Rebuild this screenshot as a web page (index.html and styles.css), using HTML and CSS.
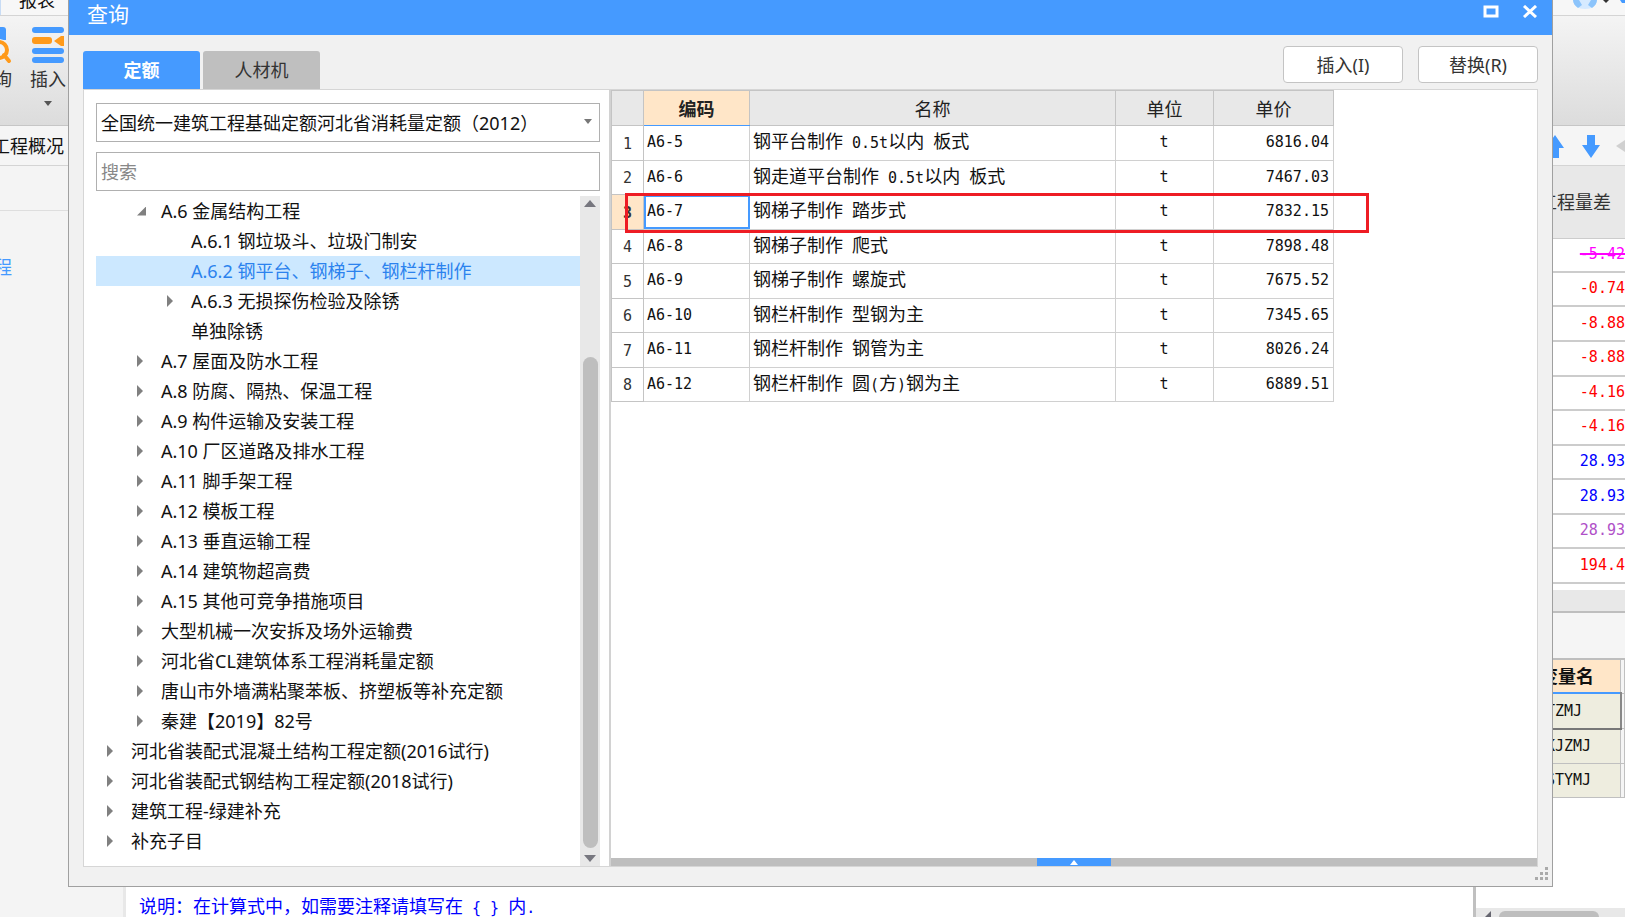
FILE: index.html
```html
<!DOCTYPE html>
<html lang="zh-CN">
<head>
<meta charset="utf-8">
<title>查询</title>
<link rel="stylesheet" href="styles.css">
</head>
<body>
<div class="app">
  <header class="tabstrip">
    <button class="strip-tab" type="button">报表</button>
    <svg class="account" width="56" height="10" viewBox="0 0 56 10" aria-hidden="true">
      <path d="M4 0h24c-1 6-5 9-12 9S5 6 4 0z" fill="#d6eaff"/>
      <path d="M4 0h6l3 5-4 3C6 6 4 3 4 0zM28 0h-6l-3 5 4 3c3-2 5-5 5-8z" fill="#8cc4fb"/>
      <path d="M34 0h6l-3 3z" fill="#333"/>
      <path d="M51 0h5v3h-3z" fill="#459aff"/>
    </svg>
  </header>
  <div class="ribbon">
    <button class="ribbon-btn" type="button">
      <svg width="36" height="40" viewBox="0 0 36 40" aria-hidden="true">
        <path d="M2 5q0-3 3-3h22q3 0 3 3v10H2z" fill="#459aff"/>
        <circle cx="23" cy="25" r="11" fill="#f2f2f2"/>
        <circle cx="23" cy="25" r="8" fill="none" stroke="#ff9a1a" stroke-width="4"/>
        <path d="M28 30l5 6" stroke="#ff9a1a" stroke-width="4" stroke-linecap="round"/>
      </svg>
      <span>查询</span>
    </button>
    <button class="ribbon-btn" type="button">
      <svg width="36" height="40" viewBox="0 0 36 40" aria-hidden="true">
        <g fill="#459aff"><rect x="2" y="2" width="32" height="6" rx="3"/><rect x="2" y="23" width="32" height="6" rx="3"/><rect x="2" y="32" width="32" height="6" rx="3"/></g>
        <rect x="2" y="12" width="20" height="7" rx="3" fill="#ff9a1a"/><path d="M24 16l7-5h3v10h-3z" fill="#ff9a1a"/>
      </svg>
      <span>插入</span>
      <svg class="btn-caret" width="8" height="5" viewBox="0 0 8 5" aria-hidden="true"><path d="M0 0h8L4 5z" fill="#555"/></svg>
    </button>
  </div>
  <div class="toolbar">
    <button class="overview" type="button">工程概况</button>
    <div class="movers">
      <button type="button" aria-label="上移"><svg width="18" height="24" viewBox="0 0 18 24"><path d="M9 1l9 13h-5v10H5V14H0z" fill="#459aff"/></svg></button>
      <button type="button" aria-label="下移"><svg width="18" height="24" viewBox="0 0 18 24"><path d="M5 1h8v10h5L9 24 0 11h5z" fill="#459aff"/></svg></button>
      <button type="button" aria-label="左移"><svg width="9" height="24" viewBox="0 0 9 24"><path d="M0 12L9 6v12z" fill="#d0d0d0"/></svg></button>
    </div>
  </div>
  <div class="workspace">
    <nav class="side"><div class="side-head"></div><a href="#">程</a></nav>
    <main class="sheet"><p class="hint">说明：在计算式中，如需要注释请填写在<span class="mono"> { } </span>内<span class="mono">.</span></p></main>
    <aside class="extra">
      <table class="diffs">
        <thead><tr><th>工程量差</th></tr></thead>
        <tbody>
          <tr><td class="gone">-5.42</td></tr>
          <tr><td class="neg">-0.74</td></tr>
          <tr><td class="neg">-8.88</td></tr>
          <tr><td class="neg">-8.88</td></tr>
          <tr><td class="neg">-4.16</td></tr>
          <tr><td class="neg">-4.16</td></tr>
          <tr><td class="pos">28.93</td></tr>
          <tr><td class="pos">28.93</td></tr>
          <tr><td class="alt">28.93</td></tr>
          <tr><td class="neg">194.4</td></tr>
        </tbody>
      </table>
      <div class="splitter"></div>
      <div class="subbar"></div>
      <table class="vars">
        <thead><tr><th>变量名</th><th class="rest"></th></tr></thead>
        <tbody>
          <tr><td class="picked">TZMJ</td><td class="rest"></td></tr>
          <tr><td>KJZMJ</td><td class="rest"></td></tr>
          <tr><td>STYMJ</td><td class="rest"></td></tr>
        </tbody>
      </table>
      <div class="hscroll"><svg width="6" height="9" viewBox="0 0 6 9" aria-hidden="true"><path d="M6 3v6H0z" fill="#666670"/></svg><div class="hthumb"></div></div>
    </aside>
  </div>

  <section class="dialog" role="dialog" aria-labelledby="dlg-title">
    <div class="titlebar">
      <h1 id="dlg-title">查询</h1>
      <div class="winctl">
        <button type="button" aria-label="最大化"><svg width="16" height="13" viewBox="0 0 16 13"><rect x="2" y="2" width="12" height="9" fill="none" stroke="#fff" stroke-width="3"/></svg></button>
        <button type="button" aria-label="关闭"><svg width="16" height="13" viewBox="0 0 16 13"><path d="M2 1l12 11M14 1L2 12" stroke="#fff" stroke-width="3"/></svg></button>
      </div>
    </div>
    <div class="dialog-body">
      <div class="head">
        <div class="tabs" role="tablist">
          <button class="tab active" type="button" role="tab" aria-selected="true">定额</button>
          <button class="tab" type="button" role="tab" aria-selected="false">人材机</button>
        </div>
        <div class="actions">
          <button class="action" type="button">插入(I)</button>
          <button class="action" type="button">替换(R)</button>
        </div>
      </div>
      <div class="panel">
        <div class="left">
          <div class="combo">
            <select aria-label="定额库"><option>全国统一建筑工程基础定额河北省消耗量定额（2012）</option></select>
            <svg width="8" height="5" viewBox="0 0 8 5" aria-hidden="true"><path d="M0 0h8L4 5z" fill="#777"/></svg>
          </div>
          <input class="search" type="text" placeholder="搜索" aria-label="搜索">
          <div class="tree-wrap">
            <ul class="tree">
              <li><button type="button" class="node l1 open">A.6 金属结构工程</button></li>
              <li><button type="button" class="node l2 leaf">A.6.1 钢垃圾斗、垃圾门制安</button></li>
              <li><button type="button" class="node l2 leaf selected">A.6.2 钢平台、钢梯子、钢栏杆制作</button></li>
              <li><button type="button" class="node l2">A.6.3 无损探伤检验及除锈</button></li>
              <li><button type="button" class="node l2 leaf">单独除锈</button></li>
              <li><button type="button" class="node l1">A.7 屋面及防水工程</button></li>
              <li><button type="button" class="node l1">A.8 防腐、隔热、保温工程</button></li>
              <li><button type="button" class="node l1">A.9 构件运输及安装工程</button></li>
              <li><button type="button" class="node l1">A.10 厂区道路及排水工程</button></li>
              <li><button type="button" class="node l1">A.11 脚手架工程</button></li>
              <li><button type="button" class="node l1">A.12 模板工程</button></li>
              <li><button type="button" class="node l1">A.13 垂直运输工程</button></li>
              <li><button type="button" class="node l1">A.14 建筑物超高费</button></li>
              <li><button type="button" class="node l1">A.15 其他可竞争措施项目</button></li>
              <li><button type="button" class="node l1">大型机械一次安拆及场外运输费</button></li>
              <li><button type="button" class="node l1">河北省CL建筑体系工程消耗量定额</button></li>
              <li><button type="button" class="node l1">唐山市外墙满粘聚苯板、挤塑板等补充定额</button></li>
              <li><button type="button" class="node l1">秦建【2019】82号</button></li>
              <li><button type="button" class="node">河北省装配式混凝土结构工程定额(2016试行)</button></li>
              <li><button type="button" class="node">河北省装配式钢结构工程定额(2018试行)</button></li>
              <li><button type="button" class="node">建筑工程-绿建补充</button></li>
              <li><button type="button" class="node">补充子目</button></li>
            </ul>
            <div class="vscroll">
              <svg width="12" height="7" viewBox="0 0 12 7" aria-hidden="true"><path d="M0 7h12L6 0z" fill="#77777f"/></svg>
              <div class="track"><div class="vthumb"></div></div>
              <svg width="12" height="7" viewBox="0 0 12 7" aria-hidden="true"><path d="M0 0h12L6 7z" fill="#77777f"/></svg>
            </div>
          </div>
        </div>
        <div class="right">
          <div class="grid-area">
            <table class="grid">
              <colgroup><col class="c-no"><col class="c-code"><col class="c-name"><col class="c-unit"><col class="c-price"></colgroup>
              <thead><tr><th></th><th class="current">编码</th><th>名称</th><th>单位</th><th>单价</th></tr></thead>
              <tbody>
                <tr><th>1</th><td class="mono">A6-5</td><td>钢平台制作<span class="mono"> 0.5t</span>以内<span class="mono"> </span>板式</td><td class="mono unit">t</td><td class="mono price">6816.04</td></tr>
                <tr><th>2</th><td class="mono">A6-6</td><td>钢走道平台制作<span class="mono"> 0.5t</span>以内<span class="mono"> </span>板式</td><td class="mono unit">t</td><td class="mono price">7467.03</td></tr>
                <tr><th class="current">3</th><td class="mono cell-focus">A6-7</td><td>钢梯子制作<span class="mono"> </span>踏步式</td><td class="mono unit">t</td><td class="mono price">7832.15</td></tr>
                <tr><th>4</th><td class="mono">A6-8</td><td>钢梯子制作<span class="mono"> </span>爬式</td><td class="mono unit">t</td><td class="mono price">7898.48</td></tr>
                <tr><th>5</th><td class="mono">A6-9</td><td>钢梯子制作<span class="mono"> </span>螺旋式</td><td class="mono unit">t</td><td class="mono price">7675.52</td></tr>
                <tr><th>6</th><td class="mono">A6-10</td><td>钢栏杆制作<span class="mono"> </span>型钢为主</td><td class="mono unit">t</td><td class="mono price">7345.65</td></tr>
                <tr><th>7</th><td class="mono">A6-11</td><td>钢栏杆制作<span class="mono"> </span>钢管为主</td><td class="mono unit">t</td><td class="mono price">8026.24</td></tr>
                <tr><th>8</th><td class="mono">A6-12</td><td>钢栏杆制作<span class="mono"> </span>圆<span class="mono">(</span>方<span class="mono">)</span>钢为主</td><td class="mono unit">t</td><td class="mono price">6889.51</td></tr>
              </tbody>
            </table>
            <div class="marker"></div>
          </div>
          <div class="drawer"><button type="button" aria-label="展开"><svg width="8" height="5" viewBox="0 0 8 5"><path d="M0 5h8L4 0z" fill="#fff"/></svg></button></div>
        </div>
      </div>
    </div>
    <svg class="grip" width="13" height="13" viewBox="0 0 13 13" aria-hidden="true"><path d="M10 0h3v3h-3zM5 5h3v3H5zM10 5h3v3h-3zM0 10h3v3H0zM5 10h3v3H5zM10 10h3v3h-3z" fill="#aaa"/></svg>
  </section>
</div>
</body>
</html>
```
FILE: styles.css
```css
* { box-sizing: border-box; }

body {
  margin: 0;
  font: 18px/24px "Noto Sans", "Noto Sans CJK SC", sans-serif;
  color: #111;
}

button {
  margin: 0;
  padding: 0;
  border: 0;
  background: none;
  font: inherit;
  color: inherit;
}

svg { display: block; flex: none; }

table { border-collapse: collapse; table-layout: fixed; }

.mono { font-family: "DejaVu Sans Mono", monospace; font-size: 15px; white-space: pre; }

/* Application behind the dialog */
.app {
  position: relative;
  display: flex;
  flex-direction: column;
  height: 100vh;
  overflow: hidden;
  background: #fff;
}

.tabstrip {
  display: flex;
  justify-content: space-between;
  align-items: flex-end;
  height: 16px;
  flex: none;
  overflow: hidden;
  background: #f7f7f7;
  border-bottom: 1px solid #d4d4d4;
}
.strip-tab { padding: 0 18px 3px; border-left: 1px solid #c8dcf5; }
.account { align-self: flex-start; }

.ribbon {
  display: flex;
  gap: 18px;
  height: 110px;
  flex: none;
  margin-left: -24px;
  padding-top: 9px;
  background: linear-gradient(#f4f4f4, #dcdcdc);
  border-bottom: 1px solid #c6c6c6;
}
.ribbon-btn {
  display: flex;
  flex-direction: column;
  align-items: center;
  align-self: flex-start;
  gap: 2px;
  color: #333;
}
.btn-caret { margin-top: 8px; }

.toolbar {
  display: flex;
  justify-content: space-between;
  align-items: center;
  height: 40px;
  flex: none;
  background: #f5f5f5;
  border-bottom: 1px solid #d4d4d4;
}
.overview { margin-left: -8px; }
.movers { display: flex; gap: 16px; }
.movers button:first-child { margin-right: 2px; }

.workspace { display: flex; flex: 1; min-height: 0; }
.side {
  width: 126px;
  background: #f4f4f4;
  border-right: 3px solid #e8e8e8;
}
.side-head { height: 45px; border-bottom: 1px solid #dedede; margin-bottom: 44px; }
.side a { margin-left: -6px; color: #459aff; text-decoration: none; }
.sheet { flex: 1; display: flex; align-items: flex-end; padding-left: 13px; }
.hint {
  margin: 0;
  height: 24px;
  font-family: "Noto Sans CJK SC", sans-serif;
  color: #00f;
}

.extra {
  display: flex;
  flex-direction: column;
  width: 152px;
  border-left: 3px solid #c0c0c0;
}
.diffs { width: 100%; height: 418px; flex: none; margin-bottom: 6px; }
.diffs th {
  height: 72px;
  padding: 0 14px 0 0;
  text-align: right;
  font-weight: 400;
  color: #333;
  background: #e8e8e8;
  border-bottom: 1px solid #ccc;
}
.diffs td {
  padding: 0 0 2px;
  text-align: right;
  font: 15px/20px "DejaVu Sans Mono", monospace;
  border-bottom: 2px solid #ccc;
}
.diffs .gone { color: #f0f; text-decoration: line-through 2px; }
.diffs .neg { color: #f00; }
.diffs .pos { color: #00f; }
.diffs .alt { color: #b050c8; }
.splitter { height: 23px; flex: none; background: #e8e8e8; border-bottom: 2px solid #bebebe; }
.subbar { height: 47px; flex: none; background: #f5f5f5; border-bottom: 2px solid #bebebe; }
.vars { width: 100%; height: 138px; flex: none; margin-bottom: auto; }
.vars th, .vars td {
  padding: 0 0 0 70px;
  text-align: left;
  white-space: nowrap;
  border-right: 1px solid #c0c0c0;
  border-bottom: 1px solid #c0c0c0;
}
.vars th { height: 33px; padding: 0 26px 0 0; text-align: right; background: #ffe6c8; }
.vars td { background: #eeeddf; font: 15px/20px "DejaVu Sans Mono", monospace; }
.vars .picked { border-top: 2px solid #459aff; border-right: 2px solid #888; border-bottom: 2px solid #777; }
.vars .rest { width: 4px; padding: 0; background: #f5f5f5; }
.hscroll { display: flex; align-items: flex-end; gap: 8px; height: 9px; flex: none; padding-left: 9px; background: #e8e8e8; }
.hthumb { width: 100px; height: 6px; border-radius: 6px 6px 0 0; background: #bebebe; }

/* Query dialog */
.dialog {
  position: absolute;
  top: 0;
  right: 72px;
  bottom: 30px;
  left: 68px;
  display: flex;
  flex-direction: column;
  background: #f1f1f1;
  border: 1px solid #a0a0a0;
  border-top: 0;
}
.titlebar {
  display: flex;
  justify-content: space-between;
  height: 35px;
  flex: none;
  padding: 0 14px 0 18px;
  background: #459aff;
  color: #fff;
}
.titlebar h1 { margin: 0; font-size: 21px; line-height: 29px; font-weight: 400; }
.winctl { display: flex; gap: 23px; padding-top: 5px; align-items: flex-start; }

.dialog-body { display: flex; flex-direction: column; flex: 1; min-height: 0; padding: 0 14px 19px; }
.head { display: flex; justify-content: space-between; align-items: flex-end; height: 54px; flex: none; }
.tabs { display: flex; gap: 3px; }
.tab { width: 117px; height: 38px; border-radius: 3px 3px 0 0; background: #bfbfbf; color: #333; }
.tab.active { background: #459aff; color: #fff; font-weight: 700; }
.actions { display: flex; gap: 15px; padding-bottom: 6px; }
.action { width: 120px; height: 37px; border: 1px solid #c4c4c4; border-radius: 4px; background: #fff; color: #333; }

.panel { display: flex; flex: 1; min-height: 0; border: 1px solid #d6d6d6; background: #fff; }
.left {
  display: flex;
  flex-direction: column;
  flex: none;
  width: 527px;
  padding: 13px 9px 0 12px;
  border-right: 2px solid #d2d2d2;
}
.combo { position: relative; }
.combo select, .search {
  display: block;
  width: 100%;
  height: 39px;
  padding: 0 4px;
  border: 1px solid #b0b0b0;
  border-radius: 0;
  background: #fff;
  font: inherit;
  color: #111;
  appearance: none;
}
.combo svg { position: absolute; right: 8px; top: 16px; }
.search { margin: 10px 0 5px; }
.search::placeholder { color: #888; opacity: 1; }

.tree-wrap { display: flex; flex: 1; min-height: 0; overflow: hidden; }
.tree { flex: 1; margin: 0; padding: 0; list-style: none; }
.node {
  display: flex;
  align-items: center;
  width: 100%;
  height: 30px;
  padding-left: 11px;
  white-space: nowrap;
}
.node::before {
  content: "";
  width: 6px;
  height: 12px;
  margin-right: 18px;
  background: #808080;
  clip-path: polygon(0 0, 100% 50%, 0 100%);
}
.node.l1 { padding-left: 41px; }
.node.l2 { padding-left: 71px; }
.node.leaf::before { background: none; }
.node.open::before { width: 9px; height: 9px; margin-right: 15px; clip-path: polygon(100% 0, 100% 100%, 0 100%); }
.node.selected { background: #cce8ff; color: #2b82ee; }

.vscroll {
  display: flex;
  flex-direction: column;
  align-items: center;
  gap: 3px;
  width: 20px;
  padding: 4px 0;
  background: #e8e8e8;
}
.track { display: flex; flex-direction: column; flex: 1; width: 15px; padding: 147px 0 4px; }
.vthumb { flex: 1; border-radius: 8px; background: #bebebe; }

.right { display: flex; flex-direction: column; flex: 1; min-width: 0; }
.grid-area { position: relative; flex: 1; }
.grid { width: 722px; height: 312px; border: 1px solid #c8c8c8; }
.c-no { width: 32px; }
.c-code { width: 106px; }
.c-name { width: 366px; }
.c-unit { width: 98px; }
.c-price { width: 120px; }
.grid th, .grid td { padding: 0 4px 2px 3px; border: 1px solid #d0d0d0; text-align: left; white-space: nowrap; }
.grid td { padding-bottom: 1px; }
.grid thead th {
  height: 35px;
  padding: 1px 0 0;
  text-align: center;
  font-weight: 400;
  color: #222;
  background: #e8e8e8;
  border-color: #c4c4c4;
}
.grid thead .current { background: #ffe6c8; font-weight: 700; border-bottom-color: #459aff; }
.grid tbody th { padding: 2px 0 0; text-align: center; font: 15px/20px "DejaVu Sans Mono", monospace; color: #333; border-color: #c4c4c4; }
.grid tbody .current { background: #ffe6c8; font-weight: 700; }
.grid .unit { text-align: center; }
.grid .price { text-align: right; }
.grid .cell-focus { outline: 2px solid #459aff; outline-offset: -2px; }
.marker {
  position: absolute;
  top: 103px;
  left: 14px;
  width: 744px;
  height: 40px;
  border: 3px solid #ee1c24;
}
.drawer { display: flex; justify-content: center; height: 8px; background: #bebebe; }
.drawer button { display: flex; align-items: center; justify-content: center; width: 74px; background: #459aff; }
.grip { position: absolute; right: 4px; bottom: 6px; }
```
